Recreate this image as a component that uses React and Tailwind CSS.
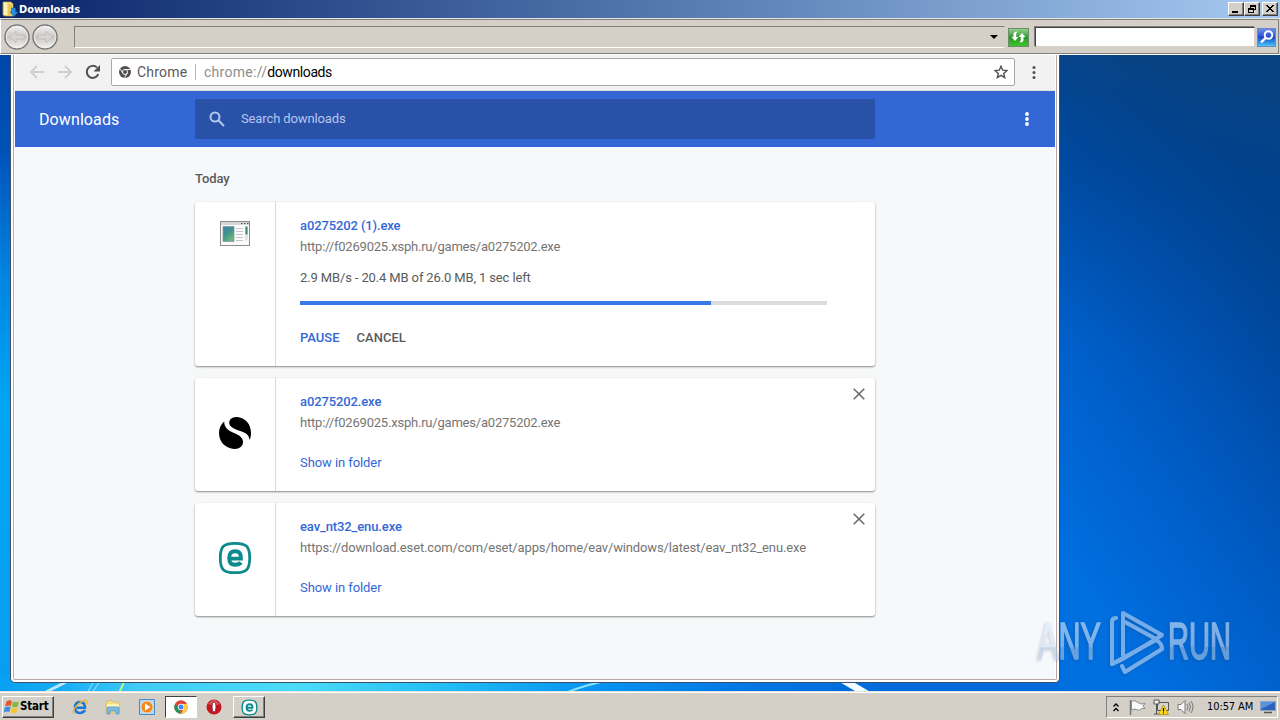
import React from "react";

const ui = "font-['DejaVu_Sans_Condensed','DejaVu_Sans',sans-serif]";
const raised =
  "bg-[#d4d0c8] border border-t-white border-l-white border-r-[#404040] border-b-[#404040] shadow-[inset_-1px_-1px_0_#808080]";

function CaptionButton({ children, className = "" }) {
  return (
    <div className={`flex h-[14px] w-4 items-center justify-center ${raised} ${className}`}>
      <svg width="12" height="10" viewBox="0 0 12 10" shapeRendering="crispEdges" fill="none" stroke="#000">
        {children}
      </svg>
    </div>
  );
}

function NavOrb({ flip }) {
  return (
    <svg width="26" height="26" viewBox="0 0 26 26" className={flip ? "-scale-x-100" : ""}>
      <circle cx="13" cy="13" r="12" fill="url(#orb)" stroke="#77787a" strokeWidth="1.5" />
      <circle cx="13" cy="13" r="10.8" fill="none" stroke="#f3f2ef" strokeWidth=".8" />
      <path d="M6 13l6-6v4h8v4h-8v4z" fill="#d7d5d1" stroke="#bdbbb7" strokeWidth=".8" />
      <defs>
        <linearGradient id="orb" x1="0" y1="0" x2="0" y2="1">
          <stop offset="0" stopColor="#f4f4f3" />
          <stop offset=".5" stopColor="#c9c7c4" />
          <stop offset="1" stopColor="#f4f4f2" />
        </linearGradient>
      </defs>
    </svg>
  );
}

function TitleBar() {
  return (
    <header className="flex h-[18px] shrink-0 items-center bg-linear-to-r from-[#0a246a] to-[#a6caf0] pr-[2px] pl-[2px]">
      <svg width="16" height="16" viewBox="0 0 16 16">
        <path d="M1 1h8l2 2v12H3L1 14z" fill="#f6dc7c" stroke="#c9a33c" strokeWidth=".7" />
        <path d="M2 1.500h3v12.500H2z" fill="#fdf3b4" />
        <path d="M6 3h4v11H6z" fill="#eec75b" />
        <path d="M9.500 7h4v4H16l-4 4.500L8 11h1.500z" fill="#2b8fe0" stroke="#1565b0" strokeWidth=".6" />
      </svg>
      <span className={`ml-px pt-px text-[11px] leading-[16px] font-bold text-white ${ui}`}>Downloads</span>
      <div className="ml-auto flex">
        <CaptionButton>
          <path d="M2 7.500h6M2 8.500h6" />
        </CaptionButton>
        <CaptionButton>
          <path d="M4 1h6M4 2h6M4.500 1v4M9.500 1v5M2 5h6M2 4.500h6M2.500 4v5M7.500 4v5M2 8.500h6M8 5.500h2" />
        </CaptionButton>
        <CaptionButton className="ml-[2px]">
          <path d="M2 1l7 7M3 1l7 7M9 1l-7 7M10 1l-7 7" shapeRendering="auto" />
        </CaptionButton>
      </div>
    </header>
  );
}

function ExplorerBar() {
  return (
    <div className="flex h-[37px] shrink-0 flex-col border-t border-b border-t-[#e8e6e2] border-b-white bg-[#d4d0c8]">
      <div className="mr-px flex h-[35px] items-center border border-t-[#808080] border-r-[#808080] border-b-[#808080] border-l-white pt-px pl-[3px]">
        <div className="flex gap-[2px]">
          <NavOrb />
          <NavOrb flip />
        </div>
        <div className="ml-4 flex h-[22px] w-[931px] items-center justify-end border border-t-[#808080] border-r-[#d4d0c8] border-b-white border-l-[#808080] pr-[6px]">
          <svg width="8" height="4" viewBox="0 0 8 4">
            <path d="M0 0h8L4 4z" />
          </svg>
        </div>
        <div className="ml-[3px] flex h-[19px] w-[21px] items-center justify-center border border-[#6b8b6a] bg-linear-to-b from-[#8fd08a] via-[#27992a] to-[#3fc52b]">
          <svg width="17" height="16" viewBox="0 0 17 16" fill="#fff">
            <path d="M7.500 2.500L6.200 4.500V8h2.300L5 12 1.500 8h2V5q0-2.500 4-2.500z" />
            <path d="M12 4l3.500 4h-2v3q0 2.500-4 2.500L10.800 11.500V8H8.500z" />
          </svg>
        </div>
        <div className="ml-[6px] h-[20px] w-[220px] border border-t-[#404040] border-r-[#d4d0c8] border-b-[#d4d0c8] border-l-[#404040] bg-white shadow-[-1px_-1px_0_#808080]" />
        <div className="ml-[2px] flex h-[19px] w-[19px] shrink-0 items-center justify-center border border-[#6e87c5] bg-linear-to-b from-[#6d8de8] via-[#2145cf] to-[#4fc5f5]">
          <svg width="16" height="16" viewBox="0 0 16 16" fill="none" stroke="#fff" strokeWidth="2">
            <circle cx="9.500" cy="6" r="3.800" />
            <path d="M6.500 9L2 13.500" strokeWidth="2.400" />
          </svg>
        </div>
      </div>
    </div>
  );
}

function ChromeToolbar() {
  return (
    <div className="flex h-9 items-center border-b border-[#e2e2dc] bg-[#f2f2f2] pb-px pl-[14px]">
      <svg width="16" height="14" viewBox="0 0 16 14" fill="none" stroke="#cfcfcf" strokeWidth="1.800">
        <path d="M8 1L2 7l6 6M2 7h13" />
      </svg>
      <svg className="ml-[12px]" width="16" height="14" viewBox="0 0 16 14" fill="none" stroke="#cfcfcf" strokeWidth="1.800">
        <path d="M8 1l6 6-6 6M14 7H1" />
      </svg>
      <svg className="ml-[12px]" width="16" height="16" viewBox="0 0 16 16" fill="none" stroke="#505050" strokeWidth="2">
        <path d="M13.300 10.200A6 6 0 1 1 12 3.600" />
        <path d="M15 1v6.500H8.500z" fill="#505050" stroke="none" />
      </svg>
      <div className="ml-[10px] flex h-7 w-[904px] items-center rounded-[2px] border border-[#a9a9a9] bg-white pr-[6px] pl-[7px] font-[Roboto,sans-serif] text-sm">
        <svg width="12" height="12" viewBox="0 0 12 12">
          <circle cx="6" cy="6" r="6" fill="#505050" />
          <circle cx="6" cy="6" r="2.500" fill="none" stroke="#fff" strokeWidth="1" />
          <path d="M6 3.500h5.500M3.800 7.200L1.200 2.800M8.200 7.200L5.600 11.700" stroke="#fff" strokeWidth=".9" />
        </svg>
        <span className="ml-[6px] w-[50px] tracking-[0.2px] whitespace-nowrap text-[#5a5a5a]">Chrome</span>
        <span className="ml-2 h-4 w-px bg-[#b8b8b8]" />
        <span className="ml-2 tracking-[0.28px] text-[#8c8c8c]">
          chrome://<span className="tracking-[-0.4px] text-black">downloads</span>
        </span>
        <svg className="ml-auto" width="14" height="14" viewBox="0 0 14 14" fill="none" stroke="#505050" strokeWidth="1.400">
          <path d="M7 1.300l1.700 3.900 4.200.4-3.200 2.800 1 4.200L7 10.400l-3.700 2.200 1-4.200L1.100 5.600l4.200-.4z" />
        </svg>
      </div>
      <svg className="ml-[17px]" width="4" height="13" viewBox="0 0 4 13" fill="#505050">
        <circle cx="2" cy="1.600" r="1.500" />
        <circle cx="2" cy="6.500" r="1.500" />
        <circle cx="2" cy="11.400" r="1.500" />
      </svg>
    </div>
  );
}

function ProgramIcon() {
  return (
    <svg className="mr-px" width="32" height="32" viewBox="0 0 32 32">
      <rect x="1.500" y="4.500" width="29" height="24" fill="#fbfbfb" stroke="#8c8c8c" />
      <path d="M2 5h28v3H2z" fill="#d3d7d8" />
      <path d="M22 6.500h1.500M25 6.500h1.500M28 6.500h1.500" stroke="#555" />
      <path d="M4 9.500h11v15H4z" fill="url(#pane)" stroke="#7d99a5" strokeWidth=".8" />
      <path d="M17 11.500h7M17 14.500h7M17 17.500h7M17 20.500h7M17 23.500h7" stroke="#c6c6c6" />
      <path d="M26 9.500h3v14h-3z" fill="#e4e4e4" />
      <path d="M26.500 9.500h2v8h-2z" fill="#39856f" />
      <defs>
        <linearGradient id="pane" x1="0" y1="0" x2=".6" y2="1">
          <stop offset="0" stopColor="#4c7fae" />
          <stop offset=".5" stopColor="#3d938b" />
          <stop offset="1" stopColor="#70b878" />
        </linearGradient>
      </defs>
    </svg>
  );
}

function SwirlIcon() {
  return (
    <svg width="34" height="34" viewBox="0 0 34 34">
      <path d="M19 1C27 1.500 33 8 33 17C33 20 32.500 22 31.500 24C31 19 28.500 17 23 15.200C16.500 13 12 11.500 11.300 7.500C10.800 4 13.500 .8 19 1Z" />
      <path d="M6.200 5.500C6 11 10 14.500 16 17C21.500 19.200 24.500 21.500 25 25.500C25.500 30 21 33.200 16.500 33C7.500 32.500 1 26 1 17C1 12 3 8.200 6.200 5.500Z" />
    </svg>
  );
}

function EsetIcon({ size = 34 }) {
  return (
    <svg width={size} height={size} viewBox="0 0 34 34">
      <path
        d="M17 2.300C28.500 2.300 31.700 5.500 31.700 17S28.500 31.700 17 31.700 2.300 28.500 2.300 17 5.500 2.300 17 2.300Z"
        fill="#fff"
        stroke="#0d8a8c"
        strokeWidth="2.800"
      />
      <path d="M23 21.500C21.500 23.400 19.500 23.700 17.300 23.700C12.500 23.700 11.200 21.500 11.200 17.200C11.200 12.500 12.700 10.300 17.200 10.300C21.700 10.300 23 12.700 22.900 17.600H12" fill="none" stroke="#0d8a8c" strokeWidth="3.900" />
    </svg>
  );
}

function Card({ icon, name, url, urlClass = "tracking-[-0.21px]", className, iconTop, closable, children }) {
  return (
    <article
      className={`relative flex w-[680px] rounded-[3px] bg-white shadow-[0_1px_2px_rgba(0,0,0,0.45),0_0_8px_2px_rgba(250,247,242,0.9)] ${className}`}
    >
      <div className={`flex w-[81px] justify-center border-r border-[#d9d9d9] ${iconTop ? "items-start pt-[15px]" : "items-center pb-1"}`}>
        {icon}
      </div>
      <div className="flex flex-col items-start pt-[14px] pl-6 text-[13px] leading-5">
        <div className="font-medium tracking-[-0.12px] text-[#3367d6]">{name}</div>
        <div className={`mt-px text-[#757575] ${urlClass}`}>{url}</div>
        {children}
      </div>
      {closable && (
        <svg className="absolute top-[10px] right-[10px]" width="12" height="12" viewBox="0 0 12 12" stroke="#6b6b6b" strokeWidth="1.600">
          <path d="M.7.7l10.600 10.600M11.300.7L.7 11.300" />
        </svg>
      )}
    </article>
  );
}

function ShowInFolder() {
  return <div className="mt-5 tracking-[-0.08px] text-[#3367d6]">Show in folder</div>;
}

function ChromeWindow() {
  return (
    <div className="relative ml-[10px] h-[628px] w-[1050px] rounded-b-[5px] border-x border-b border-[#38506e] bg-white px-[2px] pb-[2px]">
      <div className="flex h-full flex-col rounded-b-[2px] border-x border-b border-[#b9a9a4] px-px font-[Roboto,sans-serif]">
        <ChromeToolbar />
        <div className="flex h-14 shrink-0 items-center bg-[#3367d6] pl-6">
          <div className="w-[156px] pt-[2px] text-base tracking-[0.1px] text-white">Downloads</div>
          <div className="flex h-10 w-[680px] items-center rounded-[2px] bg-[#2a51a8] pl-[14px]">
            <svg width="16" height="16" viewBox="0 0 16 16" fill="none" stroke="#b3c6ef" strokeWidth="2">
              <circle cx="6" cy="6" r="4.500" />
              <path d="M9.300 9.300L15 15" />
            </svg>
            <span className="ml-4 text-[13px] tracking-[-0.12px] text-[#b3c6ef]">Search downloads</span>
          </div>
          <svg className="ml-[150px]" width="4" height="14" viewBox="0 0 4 14" fill="#fff">
            <circle cx="2" cy="2" r="1.900" />
            <circle cx="2" cy="7" r="1.900" />
            <circle cx="2" cy="12" r="1.900" />
          </svg>
        </div>
        <main className="flex grow flex-col bg-[#f6f9fc] pt-[22px] pl-[180px]">
          <h2 className="text-[13px] leading-5 font-medium tracking-[-0.12px] text-[#5a5a5a]">Today</h2>
          <div className="mt-[13px] flex flex-col gap-3">
            <Card icon={<ProgramIcon />} iconTop name="a0275202 (1).exe" url="http://f0269025.xsph.ru/games/a0275202.exe" className="h-[164px]">
              <div className="mt-[11px] tracking-[-0.13px] text-[#5a5a5a]">2.9 MB/s - 20.4 MB of 26.0 MB, 1 sec left</div>
              <div className="mt-[13px] h-1 w-[527px] bg-[#dcdcdc]">
                <div className="h-full w-[411px] bg-[#3b78e7]" />
              </div>
              <div className="mt-[23px] flex gap-[17px] font-medium">
                <span className="text-[#3367d6]">PAUSE</span>
                <span className="text-[#5a5a5a]">CANCEL</span>
              </div>
            </Card>
            <Card icon={<SwirlIcon />} closable name="a0275202.exe" url="http://f0269025.xsph.ru/games/a0275202.exe" className="h-[113px]">
              <ShowInFolder />
            </Card>
            <Card
              icon={<EsetIcon />}
              closable
              name="eav_nt32_enu.exe"
              url="https://download.eset.com/com/eset/apps/home/eav/windows/latest/eav_nt32_enu.exe"
              urlClass="tracking-[-0.14px]"
              className="h-[113px]"
            >
              <ShowInFolder />
            </Card>
          </div>
        </main>
      </div>
    </div>
  );
}

function Wallpaper() {
  return (
    <svg className="absolute inset-0" width="1280" height="637" viewBox="0 0 1280 637">
      <defs>
        <linearGradient id="left" x1="0" y1="0" x2="0" y2="1">
          <stop offset="0" stopColor="#0046a8" />
          <stop offset=".15" stopColor="#0052b8" />
          <stop offset=".35" stopColor="#0085e2" />
          <stop offset=".55" stopColor="#00a6f4" />
          <stop offset="1" stopColor="#0a9df2" />
        </linearGradient>
        <linearGradient id="bottom" x1="0" y1="0" x2="1" y2="0">
          <stop offset="0" stopColor="#08a0f2" />
          <stop offset=".06" stopColor="#18adf5" />
          <stop offset=".13" stopColor="#40ccf6" />
          <stop offset=".28" stopColor="#4bdcf8" />
          <stop offset=".42" stopColor="#22bdf5" />
          <stop offset=".55" stopColor="#0896f2" />
          <stop offset=".7" stopColor="#0078e4" />
          <stop offset=".83" stopColor="#006cdc" />
        </linearGradient>
        <linearGradient id="right" gradientUnits="userSpaceOnUse" x1="1060" y1="500" x2="1360" y2="300">
          <stop offset="0" stopColor="#006fe0" />
          <stop offset=".35" stopColor="#005fca" />
          <stop offset=".7" stopColor="#004eac" />
          <stop offset="1" stopColor="#00408a" />
        </linearGradient>
        <linearGradient id="shade" gradientUnits="userSpaceOnUse" x1="1180" y1="0" x2="1110" y2="300">
          <stop offset="0" stopColor="#0a4280" stopOpacity=".9" />
          <stop offset=".4" stopColor="#004390" stopOpacity=".6" />
          <stop offset="1" stopColor="#0050a8" stopOpacity="0" />
        </linearGradient>
      </defs>
      <rect width="1060" height="637" fill="url(#left)" />
      <rect y="620" width="1060" height="17" fill="url(#bottom)" />
      <rect x="1058" width="222" height="637" fill="url(#right)" />
      <rect x="1058" width="222" height="400" fill="url(#shade)" />
      <g fill="none" strokeLinecap="round">
        <path d="M44 638l26-13" stroke="#d8f5ff" strokeWidth="3" opacity=".85" />
        <path d="M87 638l7-12M92 638l8-12" stroke="#bdf0ff" strokeWidth="1" opacity=".8" />
        <path d="M119 638l6-13" stroke="#bff58f" strokeWidth="2" />
        <path d="M565 638q20-8 45-13" stroke="#8be4ff" strokeWidth="2" />
        <path d="M838 622l34 20" stroke="#f2fbff" strokeWidth="7" />
      </g>
    </svg>
  );
}

function Watermark() {
  return (
    <svg className="absolute top-[551px] left-[1032px] opacity-60" width="210" height="70" viewBox="0 0 210 70">
      <defs>
        <linearGradient id="mark" x1="0" y1="0" x2="0" y2="1">
          <stop offset="0" stopColor="#e2edfb" />
          <stop offset=".6" stopColor="#cbdcf2" />
          <stop offset=".61" stopColor="#a9bfdc" />
          <stop offset="1" stopColor="#b4cceb" />
        </linearGradient>
        <filter id="soft" x="-10%" y="-10%" width="120%" height="130%">
          <feDropShadow dx="-1" dy="1" stdDeviation="1.500" floodColor="#333" floodOpacity=".4" />
        </filter>
      </defs>
      <g filter="url(#soft)">
        <g fill="url(#mark)" stroke="url(#mark)" strokeWidth="1.600" fontFamily="'Liberation Sans', Arial, sans-serif" fontSize="51">
          <text transform="translate(6 53) scale(.6 1)">ANY</text>
          <text transform="translate(136 53) scale(.57 1)">RUN</text>
        </g>
        <g fill="none" stroke="#c3d8f3" strokeWidth="4" strokeLinejoin="round" strokeLinecap="round">
          <path d="M84 12q-4 0-4 4v42l9-4 35-21" />
          <path d="M91 49V7l39 22-6 4-31-17" />
          <path d="M90 60l3 6 37-23q0-6-6-9L80 58" />
        </g>
      </g>
    </svg>
  );
}

function TaskIcon({ children, className = "" }) {
  return <div className={`flex h-[22px] w-8 items-center justify-center ${className}`}>{children}</div>;
}

function Taskbar() {
  return (
    <footer className={`relative flex h-7 shrink-0 items-center border-t border-white bg-[#d4d0c8] pt-px shadow-[0_-1px_0_#e4e1dc] ${ui}`}>
      <div className={`ml-[2px] flex h-[22px] w-[52px] items-center pl-px font-bold ${raised}`}>
        <svg width="16" height="16" viewBox="0 0 16 16">
          <path d="M2.500 2.500Q5 .5 8 2L6.800 7Q4 5.800 1 7.500z" fill="#e8562a" />
          <path d="M9 2.500q3 1.500 6 0L13.800 7.500q-3 1.500-6 0z" fill="#7fba3c" />
          <path d="M.8 8.500Q4 6.800 6.500 8L5.300 13Q2.500 12-.2 13.500z" fill="#3d8ee0" />
          <path d="M7.500 8.500q3 1.500 6 0L12.300 13.500q-3 1.500-6 0z" fill="#f7c62f" />
        </svg>
        <span className="text-[11.5px] tracking-[-0.2px]">Start</span>
      </div>
      <div className="ml-[10px] flex items-center">
        <TaskIcon>
          <svg width="16" height="16" viewBox="0 0 16 16" fill="none">
            <path d="M13 11.200Q11.500 14 8 14Q3 14 3 8.500Q3 3 8 3Q13 3 13 8.800H4.500" stroke="#1878d4" strokeWidth="2.500" />
            <path d="M2 14.500Q-.5 13 4 7.500Q11 0 14.500 1.500Q16 2.500 13.500 6" stroke="#e9b735" strokeWidth="1.300" />
          </svg>
        </TaskIcon>
        <TaskIcon className="ml-px">
          <svg width="16" height="16" viewBox="0 0 16 16">
            <path d="M1 3l5-2 2 2h6v11H1z" fill="#f3df8a" stroke="#c9ae54" strokeWidth=".6" />
            <path d="M2 5h12v4H2z" fill="#fff3b7" />
            <path d="M2 15V9q0-1 1-1h10q1 0 1 1v6h-3v-3H5v3z" fill="#79bce2" stroke="#4c91bb" strokeWidth=".7" />
          </svg>
        </TaskIcon>
        <TaskIcon className="ml-[2px]">
          <svg width="16" height="16" viewBox="0 0 16 16">
            <path d="M.5.5h15v15H.5z" fill="#b5d7f0" stroke="#468cc4" />
            <circle cx="8" cy="8" r="6" fill="#f08a1c" stroke="#fff" strokeWidth=".5" />
            <path d="M6 4.500v7L11.500 8z" fill="#fff" />
          </svg>
        </TaskIcon>
        <TaskIcon className="ml-[2px] border border-t-[#404040] border-r-white border-b-white border-l-[#404040] bg-white">
          <svg width="14" height="14" viewBox="0 0 14 14">
            <circle cx="7" cy="7" r="6.700" fill="#db4437" />
            <path d="M1.200 3.700L4.200 8.700 7 13.700A6.700 6.700 0 0 1 1.200 3.700z" fill="#0f9d58" />
            <path d="M7 4h6A6.700 6.700 0 0 1 7 13.700L9.600 8.500z" fill="#ffcd40" />
            <circle cx="7" cy="7" r="3.200" fill="#fff" />
            <circle cx="7" cy="7" r="2.500" fill="#4285f4" />
          </svg>
        </TaskIcon>
        <TaskIcon className="ml-px">
          <svg width="16" height="16" viewBox="0 0 16 16">
            <circle cx="8" cy="8" r="7.500" fill="#c41820" />
            <path d="M2 5Q8-3 14 5L8 7z" fill="#e5737a" opacity=".6" />
            <ellipse cx="8" cy="8" rx="2" ry="5" fill="#fff" stroke="#841016" strokeWidth=".8" />
          </svg>
        </TaskIcon>
        <TaskIcon className={`ml-[3px] ${raised}`}>
          <EsetIcon size={17} />
        </TaskIcon>
      </div>
      <div className="mr-[2px] ml-auto flex h-[22px] w-[172px] items-center border border-t-[#808080] border-r-white border-b-white border-l-[#808080] pl-[6px]">
        <svg width="6" height="9" viewBox="0 0 6 9" fill="none" stroke="#000" strokeWidth="1.300">
          <path d="M.5 3.500L3 1l2.500 2.500M.5 8L3 5.500 5.500 8" />
        </svg>
        <svg className="ml-[10px]" width="17" height="16" viewBox="0 0 17 16">
          <path d="M2.500 2v9q4-2 6 0 3 1 4-1.500h3.500L14 7l2-2.500Q12 6 9 3.500 6 1 2.500 2z" fill="#fafafa" stroke="#777" strokeWidth=".8" />
          <path d="M1.500 1v15" stroke="#777" strokeWidth="1.500" />
        </svg>
        <svg className="ml-[7px]" width="16" height="16" viewBox="0 0 16 16">
          <path d="M4.500 3.500h11v8h-11z" fill="#d6d3cc" stroke="#555" />
          <path d="M1 1h5v4H1zM3.500 5v10M1 15h6" fill="#eee" stroke="#555" />
          <path d="M10.500 6l5 9.500h-10z" fill="#ffd91c" stroke="#a98900" strokeWidth=".7" />
          <path d="M10.500 9v3.500M10.500 13.500v1" stroke="#000" strokeWidth="1.200" />
        </svg>
        <svg className="ml-[8px]" width="17" height="16" viewBox="0 0 17 16" fill="none" stroke="#777">
          <path d="M1 5.500h3L8 1.500v13L4 10.500H1z" fill="#fafafa" />
          <path d="M10 5q2 3 0 6M12 3.500q3 4.500 0 9M14 2q4 6 0 12" />
        </svg>
        <span className="ml-[13px] w-[48px] text-[11px] tracking-[-0.1px] whitespace-nowrap">10:57 AM</span>
        <svg className="ml-[5px]" width="16" height="13" viewBox="0 0 16 13">
          <path d="M.5.5h15v9H.5z" fill="#2b63bd" stroke="#8ea5c8" />
          <path d="M1 1h14L1 8z" fill="#5c93dd" />
          <path d="M4 11.500h8" stroke="#555" strokeWidth="1.500" />
        </svg>
      </div>
    </footer>
  );
}

export default function App() {
  return (
    <div className="flex h-[720px] w-[1280px] flex-col overflow-hidden">
      <TitleBar />
      <ExplorerBar />
      <div className="relative h-[637px] shrink-0 overflow-hidden">
        <Wallpaper />
        <ChromeWindow />
        <Watermark />
      </div>
      <Taskbar />
    </div>
  );
}
